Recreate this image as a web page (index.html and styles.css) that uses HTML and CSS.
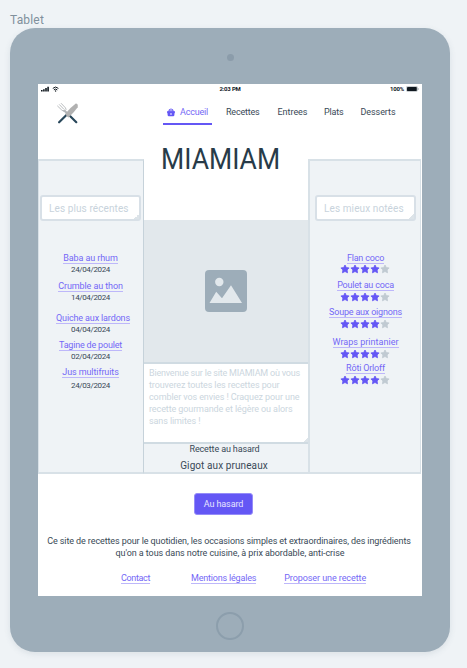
FILE: index.html
```
<!DOCTYPE html>
<html lang="fr">
<head>
<meta charset="utf-8">
<title>MIAMIAM</title>
<link rel="stylesheet" href="styles.css">
</head>
<body>
<svg class="defs" aria-hidden="true">
  <symbol id="star" viewBox="0 0 10 10"><path d="M5 1 6.3 3.5 9.1 3.95 7.1 5.95 7.55 8.8 5 7.5 2.45 8.8 2.9 5.95.9 3.95 3.7 3.5Z" fill="currentColor" stroke="currentColor" stroke-width=".8" stroke-linejoin="round"/></symbol>
  <symbol id="stars" viewBox="0 0 50 10">
    <use href="#star" width="10" height="10"/><use href="#star" x="10" width="10" height="10"/><use href="#star" x="20" width="10" height="10"/><use href="#star" x="30" width="10" height="10"/><use href="#star" class="off" x="40" width="10" height="10"/>
  </symbol>
</svg>
<div class="label">Tablet</div>
<div class="tablet">
  <div class="bezel-top"><i class="camera"></i></div>
  <div class="screen">
    <div class="status">
      <svg class="signal" width="18" height="6" viewBox="0 0 18 6"><path d="M0 4h1.6v1.6H0zM2.1 3.2h1.6v2.4H2.1zM4.2 2h1.6v3.6H4.2zM6.3.8h1.6v4.8H6.3z" fill="#10181f"/><g fill="none" stroke="#10181f" stroke-width="1"><path d="M11.8 2.4a4 4 0 0 1 5.6 0M12.9 3.9a2.4 2.4 0 0 1 3.4 0"/></g><circle cx="14.6" cy="5" r=".7" fill="#10181f"/></svg>
      <span class="time">2:03 PM</span>
      <span class="battery">100%<svg width="13" height="6" viewBox="0 0 13 6"><rect x=".4" y=".4" width="11" height="5" rx="1" fill="none" stroke="#9aa2a8" stroke-width=".6"/><rect x="1" y="1" width="9.8" height="3.9" rx=".4" fill="#10181f"/><path d="M12.2 2v2" stroke="#9aa2a8" stroke-width=".7"/></svg></span>
    </div>
    <header class="header">
      <svg class="logo" width="24" height="24" viewBox="0 0 24 24">
        <path d="M3.1 21.3 12 12.5M20.3 21.2 12 13" stroke="#28475a" stroke-width="2.2" stroke-linecap="round"/>
        <path d="M11 12 7.5 9" stroke="#b1b5b8" stroke-width="2.2"/>
        <path d="M5 2.2 9.4 6.8Q10.8 8.6 9.2 9.7 7.4 10.8 5.9 9.2L1.3 4.8M3.2 3.4 7.6 8" fill="none" stroke="#babdbf" stroke-width="1"/>
        <path d="M9.8 12.3Q13.6 7 19.8 2.4Q22.4 2.6 21.7 6.2Q18 11.5 12.6 16.4Q9.6 15.3 9.8 12.3Z" fill="#b1b1b1"/>
      </svg>
      <nav class="nav">
        <a class="active"><svg width="8" height="9" viewBox="0 0 8 9"><path d="M0 3.2h1.2L2.2.9l.8.3L2.7 3.2h.7V.4h1.2v2.8h.7L5 1.2l.8-.3 1 2.3H8v1.6h-.4L7.3 7.5q-.2.8-1 .8H1.7q-.8 0-1-.8L.4 4.8H0Z" fill="#6457f5"/><path d="M4 5v2M3 6h2" stroke="#d7d3ff" stroke-width=".8"/></svg>Accueil</a>
        <a class="rec">Recettes</a><a class="ent">Entrees</a><a class="pla">Plats</a><a class="des">Desserts</a>
      </nav>
    </header>
    <main class="main">
      <aside class="side left">
        <div class="field">Les plus récentes<i class="grip"></i></div>
        <ul class="list">
          <li><a>Baba au rhum</a><time>24/04/2024</time></li>
          <li><a>Crumble au thon</a><time>14/04/2024</time></li>
          <li class="gap"><a class="quiche">Quiche aux lardons</a><time>04/04/2024</time></li>
          <li><a class="tight">Tagine de poulet</a><time>02/04/2024</time></li>
          <li class="last"><a>Jus multifruits</a><time>24/03/2024</time></li>
        </ul>
      </aside>
      <section class="center">
        <h1>MIAMIAM</h1>
        <div class="picture"><svg width="42" height="42" viewBox="0 0 42 42"><rect width="42" height="42" rx="4" fill="#9dadb9"/><circle cx="14.3" cy="12" r="4.2" fill="#e2e8ec"/><path d="M4.5 33 11.2 21.7 17 28.2 26 15.2 37 33Z" fill="#e2e8ec"/></svg></div>
        <p class="intro"><span class="l1">Bienvenue sur le site MIAMIAM où vous</span><br>trouverez toutes les recettes pour<br>combler vos envies ! Craquez pour une<br>recette gourmande et légère ou alors<br>sans limites !<i class="grip"></i></p>
        <div class="random"><span>Recette au hasard</span><strong>Gigot aux pruneaux</strong></div>
      </section>
      <aside class="side right">
        <div class="field">Les mieux notées<i class="grip"></i></div>
        <ul class="list">
          <li><a class="tight">Flan coco</a><svg class="stars"><use href="#stars"/></svg></li>
          <li class="low"><a class="tight">Poulet au coca</a><svg class="stars"><use href="#stars"/></svg></li>
          <li class="low"><a class="tight">Soupe aux oignons</a><svg class="stars"><use href="#stars"/></svg></li>
          <li class="gap low"><a class="wide">Wraps printanier</a><svg class="stars"><use href="#stars"/></svg></li>
          <li class="low"><a class="tight">Rôti Orloff</a><svg class="stars"><use href="#stars"/></svg></li>
        </ul>
      </aside>
    </main>
    <footer class="footer">
      <button>Au hasard</button>
      <p>Ce site de recettes pour le quotidien, les occasions simples et extraordinaires, des ingrédients<br><span>qu'on a tous dans notre cuisine, à prix abordable, anti-crise</span></p>
      <div class="links"><a class="contact">Contact</a><a class="tight">Mentions légales</a><a>Proposer une recette</a></div>
    </footer>
  </div>
  <div class="bezel-bottom"><i class="home"></i></div>
</div>
</body>
</html>
```
FILE: styles.css
```
* { box-sizing: border-box; }
body {
  margin: 0;
  height: 668px;
  overflow: hidden;
  background: #eff3f6;
  color: #394956;
  font: 9px/12px Roboto, sans-serif;
  letter-spacing: -.1px;
}
ul, h1, p { margin: 0; padding: 0; list-style: none; }
.defs { position: absolute; width: 0; height: 0; }

.label {
  height: 28px;
  padding: 12px 0 0 10px;
  color: #80909c;
  font-size: 12px;
  line-height: 16px;
  letter-spacing: .17px;
}
.tablet {
  width: 440px;
  height: 624px;
  margin-left: 10px;
  padding: 0 28px;
  border-radius: 25px;
  background: #9dadb9;
  box-shadow: 0 2px 6px rgba(70, 95, 115, .12);
}
.bezel-top, .bezel-bottom { display: flex; justify-content: center; align-items: center; height: 56px; }
.bezel-top { padding-top: 2px; }
.bezel-bottom { padding-top: 3px; }
.camera { width: 7px; height: 7px; border-radius: 50%; background: #8b9caa; }
.home { width: 28px; height: 28px; border: 2px solid #8c9eac; border-radius: 50%; }
.screen { width: 384px; height: 512px; background: #fff; }

.status {
  display: grid;
  grid-template-columns: 1fr auto 1fr;
  align-items: center;
  height: 10px;
  padding: 0 3px;
  color: #10181f;
  font-size: 6px;
  font-weight: 700;
  line-height: 10px;
  letter-spacing: -.2px;
}
.battery { display: flex; justify-content: flex-end; align-items: center; gap: 2px; }

.header { display: flex; height: 36px; padding: 7px 0 0 18px; }
.nav { display: flex; margin-left: 83px; }
.nav a { height: 24px; padding-top: 5px; }
.nav .active {
  display: flex;
  gap: 5px;
  width: 49px;
  padding-left: 4px;
  border-bottom: 2px solid #6457f5;
  color: #7468f6;
  letter-spacing: -.2px;
}
.active svg { margin-top: 2px; }
.rec { width: 51.5px; margin-left: 14px; letter-spacing: -.2px; }
.ent { width: 46.5px; letter-spacing: -.03px; }
.pla { width: 36.5px; letter-spacing: -.17px; }
.des { letter-spacing: -.08px; }

.main { display: grid; grid-template-columns: 106px 164px 113px; height: 342px; }
.side {
  margin-top: 29px;
  padding-top: 36px;
  border: solid #d8e1e7;
  border-width: 2px 1px;
  background: #eff3f6;
}
.left { padding-left: 1px; border-right-color: #c6d2da; }
.right { padding-left: 5px; border-left-width: 2px; }
.field {
  position: relative;
  width: 101px;
  height: 26px;
  margin-top: -2px;
  padding: 6px 7px;
  border: 2px solid #d8e0e7;
  border-radius: 3px;
  background: #fff;
  color: #c8d3dc;
  font-size: 10px;
  letter-spacing: .1px;
}
.grip {
  position: absolute;
  right: 0;
  bottom: 0;
  width: 5px;
  height: 5px;
  background: linear-gradient(135deg, transparent 50%, #dde4e9 50%);
}
.list { display: flex; flex-direction: column; padding-top: 31px; }
.list li { display: flex; flex-direction: column; align-items: center; height: 27px; }
.list a, .links a {
  height: 12px;
  border-bottom: 1px solid #bdb7fa;
  color: #7468f6;
  line-height: 12px;
}
.list time { font-size: 8px; line-height: 11px; letter-spacing: -.36px; }
.left .list { padding-right: 2px; }
.left .list li:first-child { height: 28px; }
.left .list .gap { margin-top: 5px; }
.left .last time { margin-top: 2px; }
.list .quiche { margin-left: 5px; letter-spacing: -.14px; }
.right .list { padding-right: 4px; }
.right .list .gap { margin-top: 3px; height: 26px; }
.stars { width: 50px; height: 10px; margin-right: 2px; flex: none; color: #6457f5; }
.low .stars { margin-top: 1px; }
.off { color: #c0cad2; }
.list a.tight, .links .tight { letter-spacing: -.19px; }
.list a.wide { letter-spacing: .02px; }

.center { display: flex; flex-direction: column; }
h1 {
  width: 136px;
  height: 90px;
  margin-left: 17px;
  padding-top: 9px;
  color: #283b49;
  font-size: 30px;
  font-weight: 400;
  line-height: 40px;
  letter-spacing: 0;
  transform: scaleX(.885);
  transform-origin: 0 0;
}
.picture { display: flex; justify-content: center; align-items: center; height: 142px; background: #e2e8ec; }
.intro {
  position: relative;
  height: 82px;
  padding: 3px 0 0 5px;
  border: solid #d0dbe2;
  border-width: 2px 0 2px 0;
  background: #fff;
  color: #cbd6de;
  white-space: nowrap;
}
.l1 { letter-spacing: -.2px; }
.random {
  display: flex;
  flex: 1;
  flex-direction: column;
  align-items: center;
  border-bottom: 2px solid #d8e1e7;
  background: #eff3f6;
}
.random span { margin: -1px 3px 0 0; letter-spacing: -.13px; }
.random strong { margin: 5px 4px 0 0; font-size: 10px; font-weight: 400; letter-spacing: .09px; }

.footer { display: flex; flex-direction: column; align-items: center; padding-top: 21px; }
button {
  width: 59px;
  height: 22px;
  margin-right: 13px;
  padding: 0;
  border: 1px solid #958cf8;
  border-radius: 3px;
  background: #6457f5;
  color: #e6e4ff;
  font: inherit;
  letter-spacing: -.1px;
}
.footer p { margin-top: 20px; margin-right: 2px; text-align: center; white-space: nowrap; }
.footer p span { letter-spacing: -.065px; margin-left: 2px; }
.links { display: flex; align-self: flex-start; margin: 13px 0 0 83px; }
.links a { letter-spacing: -.08px; }
.links .tight { margin: 0 28px 0 41px; }
.links .contact { letter-spacing: -.35px; }
```
